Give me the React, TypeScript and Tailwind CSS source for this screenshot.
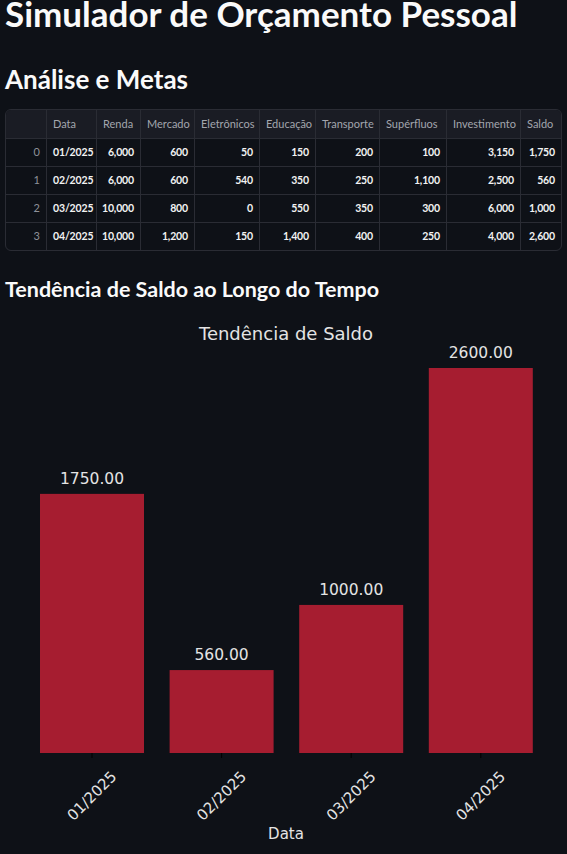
import React from 'react';

const columns = ['', 'Data', 'Renda', 'Mercado', 'Eletrônicos', 'Educação', 'Transporte', 'Supérfluos', 'Investimento', 'Saldo'];

const rows = [
  ['0', '01/2025', '6,000', '600', '50', '150', '200', '100', '3,150', '1,750'],
  ['1', '02/2025', '6,000', '600', '540', '350', '250', '1,100', '2,500', '560'],
  ['2', '03/2025', '10,000', '800', '0', '550', '350', '300', '6,000', '1,000'],
  ['3', '04/2025', '10,000', '1,200', '150', '1,400', '400', '250', '4,000', '2,600'],
];

const saldo = [
  { label: '01/2025', value: 1750 },
  { label: '02/2025', value: 560 },
  { label: '03/2025', value: 1000 },
  { label: '04/2025', value: 2600 },
];

// chart is drawn in page coords shifted by the svg top
const TOP = 303;
const BASE = 753 - TOP;
const SCALE = 385 / 2600;
const CENTERS = [92, 221.6, 351.2, 480.8];
const BAR_W = 104;

const DataTable: React.FC = () => (
  <div className="ml-[5px] w-[557px] border border-[#2a2c34] rounded-md overflow-hidden text-[11px]">
    <div className="grid grid-cols-[41px_50px_44px_54px_65px_56px_64px_67px_74px_40px]">
      {columns.map((c, i) => (
        <div
          key={c + i}
          className={`h-[29px] flex items-center px-1.5 bg-[#1a1c24] text-[#a3a6ae] border-b border-[#2a2c34] ${
            i < columns.length - 1 ? 'border-r' : ''
          }`}
        >
          {c}
        </div>
      ))}
      {rows.map((row, r) =>
        row.map((cell, i) => (
          <div
            key={`${r}-${i}`}
            className={`${r === rows.length - 1 ? 'h-[27px]' : 'h-[28px] border-b'} flex items-center px-1.5 border-[#2a2c34] ${
              i < row.length - 1 ? 'border-r' : ''
            } ${i === 1 ? 'justify-start' : 'justify-end'} ${
              i === 0 ? 'text-[#8e9199]' : 'text-[#f2f2f2] font-bold text-[10.5px] tracking-[-0.15px]'
            }`}
          >
            {cell}
          </div>
        ))
      )}
    </div>
  </div>
);

const SaldoChart: React.FC = () => (
  <svg width={567} height={854 - TOP} className="block" style={{ fontFamily: '"DejaVu Sans", sans-serif' }}>
    <text x={286} y={340 - TOP} textAnchor="middle" fontSize={18} fill="#e4e4e4">
      Tendência de Saldo
    </text>
    {saldo.map((d, i) => {
      const h = d.value * SCALE;
      const cx = CENTERS[i];
      return (
        <g key={d.label}>
          <rect x={cx - BAR_W / 2} y={BASE - h} width={BAR_W} height={h} fill="#a61d30" />
          <text x={cx} y={BASE - h - 10} textAnchor="middle" fontSize={15.5} fill="#e4e4e4">
            {d.value.toFixed(2)}
          </text>
          <line x1={cx} x2={cx} y1={BASE} y2={BASE + 5} stroke="#000" strokeWidth={1} />
          <text
            x={cx}
            y={796 - TOP}
            textAnchor="middle"
            dominantBaseline="central"
            fontSize={15}
            fill="#e4e4e4"
            transform={`rotate(-45 ${cx} ${796 - TOP})`}
          >
            {d.label}
          </text>
        </g>
      );
    })}
    <text x={286} y={839 - TOP} textAnchor="middle" fontSize={15} fill="#e4e4e4">
      Data
    </text>
  </svg>
);

export default function App() {
  return (
    <div className="min-h-screen bg-[#0e1117] text-[#fafafa] font-['Lato','Noto_Sans',sans-serif]">
      <div className="pt-px">
        <h1 className="pl-[5px] text-[35px] leading-[25px] font-bold">Simulador de Orçamento Pessoal</h1>
      </div>
      <h2 className="pl-[5px] mt-[38px] text-[26px] leading-[30px] font-bold">Análise e Metas</h2>
      <div className="mt-[15px]">
        <DataTable />
      </div>
      <h3 className="pl-[5px] mt-[24px] text-[21.5px] leading-[28px] font-bold">Tendência de Saldo ao Longo do Tempo</h3>
      <SaldoChart />
    </div>
  );
}
